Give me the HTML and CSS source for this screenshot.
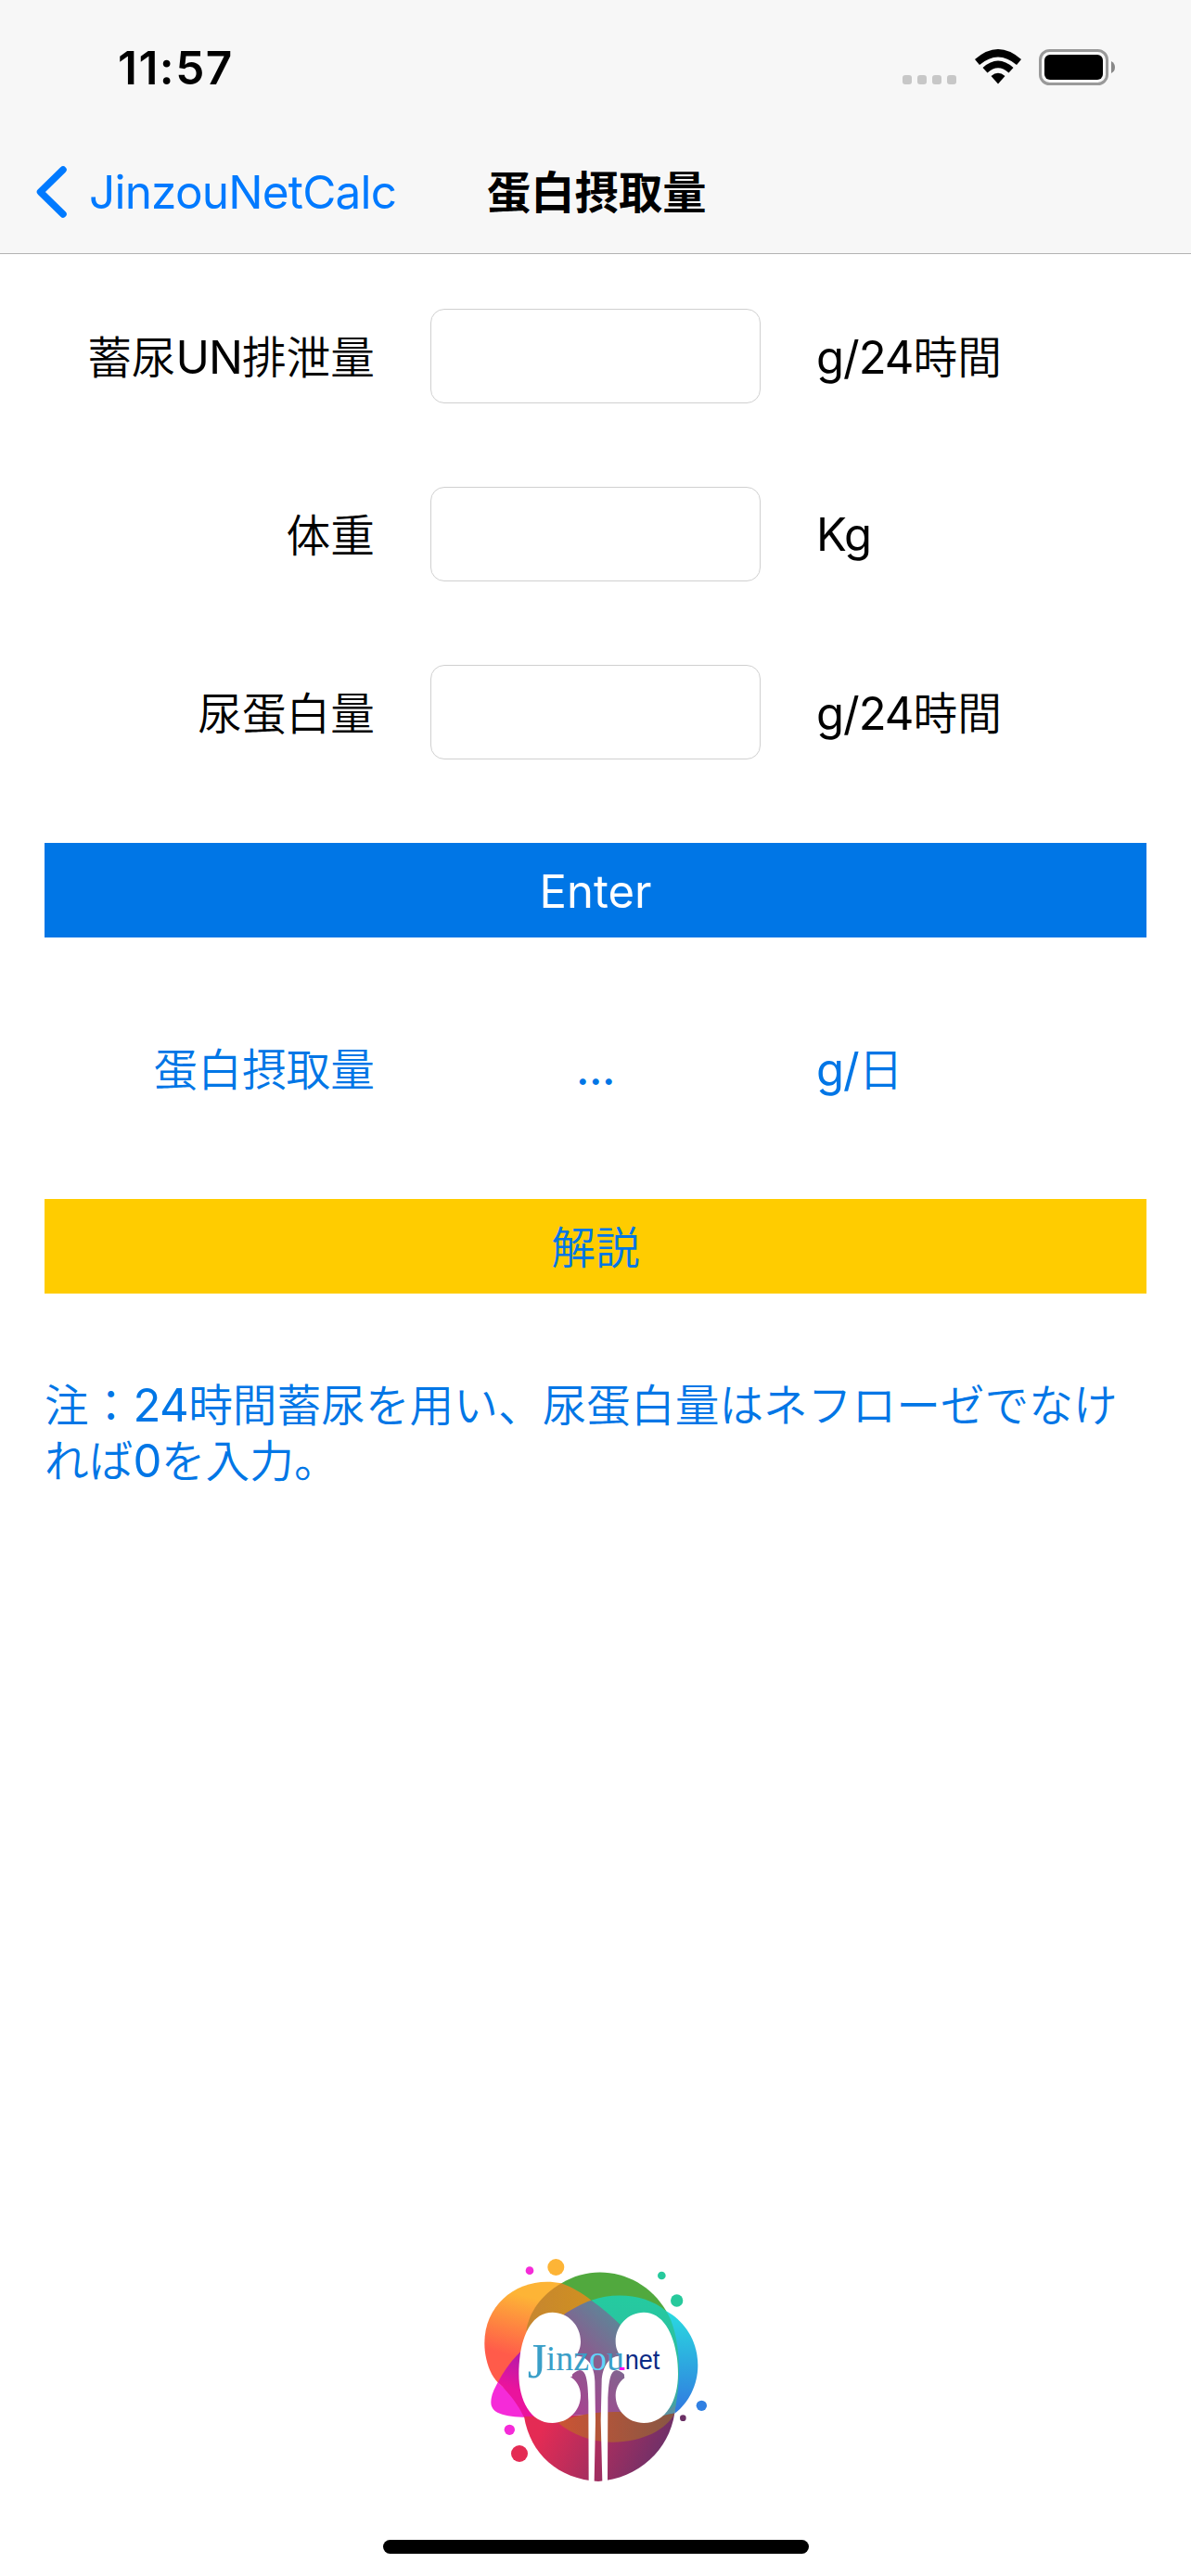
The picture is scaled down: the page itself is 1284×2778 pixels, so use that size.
FILE: index.html
```html
<!DOCTYPE html>
<html lang="ja">
<head>
  <meta charset="UTF-8">
  <title>蛋白摂取量</title>
  <link rel="stylesheet" href="styles.css">
</head>
<body>

  <header>
    <div class="status-bar">
      <span class="time">11:57</span>
      <div class="status-icons">
        <div class="signal"><i></i><i></i><i></i><i></i></div>
        <svg class="wifi" width="50" height="38" viewBox="0 0 50 38">
          <path d="M0 11 Q25 -11 50 11 L45 17 Q25 0 5 17 Z"/>
          <path d="M8.500 20 Q25 5 41.500 20 L36.500 25.500 Q25 15 13.500 25.500 Z"/>
          <path d="M17.500 29 Q25 22.500 32.500 29 L25 37.500 Z"/>
        </svg>
        <svg class="battery" width="82" height="39" viewBox="0 0 82 39">
          <rect x="1.500" y="1.500" width="72" height="36" rx="10" fill="none" stroke="#999" stroke-width="3"/>
          <rect x="6" y="6" width="63" height="27" rx="6"/>
          <path d="M78 13 Q82 15 82 19.500 Q82 24 78 26 Z" fill="#888"/>
        </svg>
      </div>
    </div>

    <nav>
      <a href="#" class="back">
        <svg width="33" height="56" viewBox="0 0 33 56">
          <path d="M29 4 L4.500 28 L29 52" fill="none" stroke="#007aff" stroke-width="7.500" stroke-linecap="round" stroke-linejoin="round"/>
        </svg>
        <span>JinzouNetCalc</span>
      </a>
      <h1>蛋白摂取量</h1>
    </nav>
  </header>

  <form id="calcForm">
    <div class="row">
      <label for="un">蓄尿<span class="latin">UN</span>排泄量</label>
      <input type="text" id="un" name="un">
      <span class="unit"><span class="latin">g/24</span>時間</span>
    </div>
    <div class="row">
      <label for="weight">体重</label>
      <input type="text" id="weight" name="weight">
      <span class="latin">Kg</span>
    </div>
    <div class="row">
      <label for="protein">尿蛋白量</label>
      <input type="text" id="protein" name="protein">
      <span class="unit"><span class="latin">g/24</span>時間</span>
    </div>

    <button type="submit" class="enter">Enter</button>

    <div class="row result">
      <label>蛋白摂取量</label>
      <output id="intake">...</output>
      <span class="unit"><span class="latin">g/</span>日</span>
    </div>

    <button type="button" class="info">解説</button>

    <p class="note">注：<span class="latin">24</span>時間蓄尿を用い、尿蛋白量はネフローゼでなければ<span class="latin">0</span>を入力。</p>
  </form>

  <footer>
    <svg class="logo" width="290" height="290" viewBox="0 0 870 870">
      <defs>
        <linearGradient id="orange" x1="0.600" y1="0" x2="0.400" y2="1">
          <stop offset="0.150" stop-color="#fdb436"/>
          <stop offset="0.750" stop-color="#ff5b4a"/>
        </linearGradient>
        <linearGradient id="pink" x1="0.600" y1="0" x2="0.300" y2="1">
          <stop offset="0" stop-color="#ad1cab"/>
          <stop offset="0.600" stop-color="#ea139d"/>
        </linearGradient>
        <linearGradient id="red" x1="0" y1="0.300" x2="1" y2="0.500">
          <stop offset="0.100" stop-color="#e42b54"/>
          <stop offset="1" stop-color="#66316a"/>
        </linearGradient>
        <linearGradient id="cyan" x1="0" y1="0" x2="0" y2="1">
          <stop offset="0" stop-color="#29dbe0"/>
          <stop offset="1" stop-color="#3178e0"/>
        </linearGradient>
        <linearGradient id="purple" x1="1" y1="0" x2="0.400" y2="1">
          <stop offset="0.200" stop-color="#5f8498"/>
          <stop offset="0.550" stop-color="#86608f"/>
          <stop offset="1" stop-color="#a54590"/>
        </linearGradient>
        <linearGradient id="mustard" x1="0" y1="0" x2="1" y2="0">
          <stop offset="0" stop-color="#c68630"/>
          <stop offset="1" stop-color="#d09020"/>
        </linearGradient>
        <linearGradient id="brown" x1="0" y1="0" x2="1" y2="0">
          <stop offset="0" stop-color="#cb5434"/>
          <stop offset="1" stop-color="#875744"/>
        </linearGradient>
        <linearGradient id="teal" x1="0" y1="0" x2="0" y2="1">
          <stop offset="0" stop-color="#24cba0"/>
          <stop offset="0.700" stop-color="#33b8a0"/>
          <stop offset="1" stop-color="#4f93a3"/>
        </linearGradient>
      </defs>

      <path fill="url(#orange)" d="M316 157 C190 130 67 215 67 350 C67 400 83 450 110 478 L260 480 L320 250 Z"/>
      <path fill="#f52bd8" d="M110 478 C98 500 88 520 88 542 C88 585 150 591 232 590 Z"/>
      <path fill="url(#pink)" d="M184 378 C155 405 130 440 110 478 C150 515 175 550 195 590 L260 590 L260 378 Z"/>
      <path fill="url(#cyan)" d="M655 247 C715 280 757 345 757 423 C757 485 727 545 682 578 Z"/>
      <path fill="#51a93e" d="M316 157 C430 85 585 125 655 247 L505 300 L300 200 Z"/>
      <path fill="url(#mustard)" d="M316 157 C250 195 212 250 202 310 L320 330 L412 212 C380 187 350 170 316 157 Z"/>
      <path fill="url(#teal)" d="M412 212 C490 185 590 192 655 247 C702 325 706 470 680 580 L600 600 L505 290 Z"/>
      <path fill="url(#red)" d="M195 588 C215 710 305 790 435 798 C565 790 665 695 682 577 Z"/>
      <path fill="url(#purple)" d="M325 257 C350 240 382 222 412 212 Q460 245 505 290 L530 580 L340 585 L300 400 Z"/>
      <path fill="url(#brown)" d="M305 608 C410 560 540 572 600 583 L682 578 C655 630 580 670 480 671 C410 670 350 645 305 608 Z"/>
      <path fill="#5b92a0" d="M630 590 C655 582 670 580 682 577 L686 550 Z"/>

      <!-- kidneys -->
      <path fill="#fff" d="M287 251 C337 251 378 293 378 345 C378 366 371 382 360 395 L350 460 L343 458 C363 470 378 492 378 520 C378 570 337 609 287 609 C215 609 178 535 178 450 C178 350 210 251 287 251 Z"/>
      <path fill="#fff" d="M582 251 C532 251 491 293 491 345 C491 366 498 382 509 395 L520 460 L527 458 C507 470 491 492 491 520 C491 570 532 609 582 609 C655 609 693 535 693 450 C693 350 657 251 582 251 Z"/>
      <path fill="#fff" d="M340 400 C385 375 424 415 424 475 L426 600 L422 798 L404 798 L403 540 C402 470 395 438 375 438 Q360 440 343 460 Z"/>
      <path fill="#fff" d="M530 400 C485 375 448 415 446 475 L443 600 L448 798 L465 798 L466 540 C468 470 475 438 495 438 Q510 440 527 460 Z"/>

      <circle cx="213" cy="116" r="13" fill="#f52bd8"/>
      <circle cx="298" cy="105" r="27" fill="#fdb436"/>
      <circle cx="640" cy="132" r="13" fill="#27c99c"/>
      <circle cx="689" cy="213" r="20" fill="#27c99c"/>
      <circle cx="769" cy="553" r="17" fill="#3180e2"/>
      <circle cx="709" cy="593" r="10" fill="#6b3165"/>
      <circle cx="148" cy="631" r="17" fill="#f52bd8"/>
      <circle cx="180" cy="708" r="27" fill="#e42b54"/>

      <text class="logo-initial" x="206" y="461" textLength="62" lengthAdjust="spacingAndGlyphs">J</text>
      <text class="logo-jinzou" x="266" y="437" textLength="253" lengthAdjust="spacingAndGlyphs">inz<tspan fill="#5fd4fa">o</tspan>u</text>
      <rect x="504" y="429" width="16" height="9" fill="#ff00f0"/>
      <text class="logo-net" x="521" y="436" textLength="113" lengthAdjust="spacingAndGlyphs">net</text>
    </svg>
    <div class="home-bar"></div>
  </footer>

</body>
</html>
```
FILE: styles.css
```css
* {
  box-sizing: border-box;
}

body {
  font-family: Inter, "Noto Sans CJK JP", sans-serif;
  font-size: 47.700px;
  font-weight: 350;
  background-color: #ffffff;
  color: #000;
  margin: 0;
  height: 2778px;
  display: flex;
  flex-direction: column;
}

header {
  background-color: #f7f7f7;
  height: 274px;
  border-bottom: 1px solid #b2b2b2;
}

.status-bar {
  display: flex;
  justify-content: space-between;
  height: 141px;
  padding: 0 82px 0 127px;
}

.time {
  font-size: 49.500px;
  font-weight: 600;
  line-height: 60px;
  padding-top: 43px;
  letter-spacing: 1.500px;
}

.status-icons {
  display: flex;
  align-items: flex-start;
  padding-top: 53px;
}

.signal {
  display: flex;
  gap: 6px;
  padding: 28px 20px 0 0;
}

.signal i {
  width: 10px;
  height: 10px;
  border-radius: 3px;
  background-color: #c7c7c7;
}

.wifi {
  margin-right: 19px;
}

nav {
  display: grid;
  grid-template-columns: 486px 1fr;
  align-items: center;
  height: 132px;
  padding-left: 39px;
}

.back {
  display: flex;
  align-items: center;
  gap: 24px;
  color: #007aff;
  font-size: 49.500px;
  font-weight: 400;
  letter-spacing: -0.800px;
  text-decoration: none;
}

h1 {
  margin: 0;
  padding-bottom: 6px;
  font-size: 47.300px;
  font-weight: 700;
}

form {
  display: flex;
  flex-direction: column;
  gap: 90px;
  padding: 59px 48px 0;
}

.row {
  display: grid;
  grid-template-columns: repeat(3, 1fr);
  column-gap: 60px;
  align-items: center;
  height: 102px;
}

label,
.unit {
  padding-bottom: 3px;
  white-space: nowrap;
}

label {
  text-align: right;
}

.latin {
  font-size: 49px;
  font-weight: 400;
  letter-spacing: -1px;
}

input {
  width: 100%;
  height: 102px;
  border: 1px solid #d0d0d0;
  border-radius: 15px;
  font: inherit;
  padding: 0 20px;
}

button {
  height: 102px;
  border: none;
  font: inherit;
  padding: 0;
}

.enter {
  background-color: #0076e6;
  color: white;
  font-size: 49px;
  font-weight: 400;
  padding-top: 2px;
}

.info {
  background-color: #ffcc00;
  color: #0076e6;
  padding-bottom: 4px;
}

.result,
.note {
  color: #0076e6;
}

output {
  font-weight: 450;
  letter-spacing: -0.500px;
  padding-top: 2px;
  text-align: center;
}

.note {
  margin: 0;
  padding-top: 1px;
  line-height: 60px;
}

.note .latin {
  letter-spacing: -0.500px;
}

footer {
  display: flex;
  flex-direction: column;
  align-items: center;
  margin-top: auto;
  padding-bottom: 24px;
}

.logo {
  margin-right: -6px;
}

.logo-initial,
.logo-jinzou {
  font-family: "Liberation Serif", serif;
  font-weight: 400;
  fill: #3a9fc8;
}

.logo-initial {
  font-size: 156px;
}

.logo-jinzou {
  font-size: 112px;
}

.logo-net {
  font-family: "Liberation Sans", sans-serif;
  font-size: 87px;
  font-weight: 400;
  fill: #0b2b86;
}

.home-bar {
  width: 459px;
  height: 15px;
  margin-top: 39px;
  border-radius: 8px;
  background-color: #000;
}
```
